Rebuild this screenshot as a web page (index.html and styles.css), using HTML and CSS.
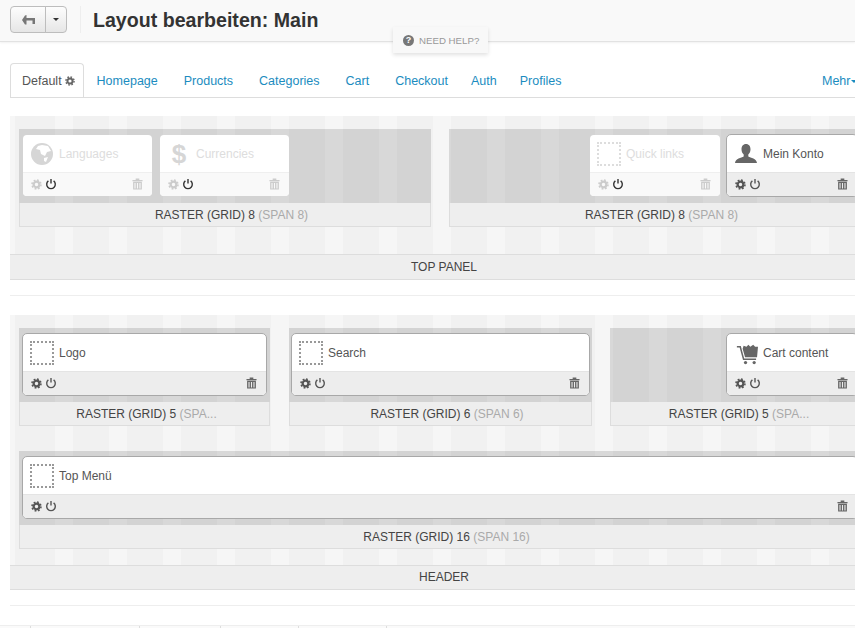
FILE: index.html
```html
<!DOCTYPE html>
<html lang="de">
<head>
  <meta charset="UTF-8" />
  <meta name="viewport" content="width=device-width, initial-scale=1.0"/>
  <title>Layout bearbeiten: Main</title>
  <link rel="stylesheet" href="styles.css">
</head>
<body>
  <!-- shared icons -->
  <svg class="sprite" xmlns="http://www.w3.org/2000/svg">
    <symbol id="i-gear" viewBox="0 0 12 12">
      <circle cx="6" cy="6" r="3.1" fill="none" stroke="currentColor" stroke-width="2.4"/>
      <circle cx="6" cy="6" r="4.9" fill="none" stroke="currentColor" stroke-width="1.7" stroke-dasharray="1.95 1.9"/>
    </symbol>
    <symbol id="i-power" viewBox="0 0 12 12">
      <path d="M3.4 2.9a4.3 4.3 0 1 0 5.2 0M6 1v4.6" fill="none" stroke="currentColor" stroke-width="1.4"/>
    </symbol>
    <symbol id="i-trash" viewBox="0 0 12 12">
      <path fill="currentColor" fill-rule="evenodd" d="M4 0h4v1.500h3.500V3H.5V1.500H4zM1.200 3.600h9.600V12H1.200zM2.700 4.800v6h1.200v-6zM5.400 4.800v6h1.200v-6zM8.100 4.800v6h1.200v-6z"/>
    </symbol>
  </svg>

  <header class="topbar">
    <div class="btn-group">
      <button class="btn btn-back">
        <svg width="13" height="10" viewBox="0 0 13 10"><path fill="#777" d="M4.500 0v3H13v2.400H4.500v4L3 9.400 0 5l3-4.400z"/><path fill="#777" d="M10.500 4H13v5h-2.500z"/></svg>
      </button>
      <button class="btn btn-caret"><span class="caret"></span></button>
    </div>
    <h1>Layout bearbeiten: Main</h1>
  </header>

  <div class="help-tab"><span class="help-icon">?</span>NEED HELP?</div>

  <nav class="tabs">
    <a class="tab active">Default <svg class="tab-gear" width="10" height="10"><use href="#i-gear"/></svg></a>
    <a class="tab">Homepage</a>
    <a class="tab">Products</a>
    <a class="tab">Categories</a>
    <a class="tab">Cart</a>
    <a class="tab">Checkout</a>
    <a class="tab tab-tight">Auth</a>
    <a class="tab tab-tight">Profiles</a>
    <a class="tab more">Mehr<span class="caret caret-blue"></span></a>
  </nav>

  <section class="panel">
    <div class="row row-loose">
      <div class="raster w-412">
        <div class="well">
          <div class="card off">
            <div class="card-head">
              <svg class="ico" viewBox="0 0 24 24"><circle cx="12" cy="12" r="11" fill="#d6d6d6"/><path fill="#fff" d="M12 3l6 1 3 5-4 1-2 4-4-2-1-4-4-1 2-3zM14 16l4-1-2 5-2-1z"/></svg>
              <span>Languages</span>
            </div>
            <div class="card-foot">
              <svg class="i gr"><use href="#i-gear"/></svg><svg class="i pw"><use href="#i-power"/></svg><svg class="i tr"><use href="#i-trash"/></svg>
            </div>
          </div>
          <div class="card off">
            <div class="card-head">
              <span class="ico dollar">$</span>
              <span>Currencies</span>
            </div>
            <div class="card-foot">
              <svg class="i gr"><use href="#i-gear"/></svg><svg class="i pw"><use href="#i-power"/></svg><svg class="i tr"><use href="#i-trash"/></svg>
            </div>
          </div>
        </div>
        <div class="raster-label shift-13">RASTER (GRID) 8 <em>(SPAN 8)</em></div>
      </div>
      <div class="raster w-425">
        <div class="well well-end">
          <div class="card off">
            <div class="card-head">
              <span class="ico dotted"></span>
              <span>Quick links</span>
            </div>
            <div class="card-foot">
              <svg class="i gr"><use href="#i-gear"/></svg><svg class="i pw"><use href="#i-power"/></svg><svg class="i tr"><use href="#i-trash"/></svg>
            </div>
          </div>
          <div class="card">
            <div class="card-head">
              <svg class="ico" viewBox="0 0 24 24"><path fill="#666" d="M12 2c3 0 4.500 2.300 4.500 5.200 0 2.300-1 4.300-2.200 5.300v2c2.500 1.200 8.200 2 8.700 6.500H1c.5-4.500 6.200-5.300 8.700-6.500v-2C8.500 11.500 7.500 9.500 7.500 7.200 7.500 4.300 9 2 12 2z"/></svg>
              <span>Mein Konto</span>
            </div>
            <div class="card-foot">
              <svg class="i gr"><use href="#i-gear"/></svg><svg class="i pw"><use href="#i-power"/></svg><svg class="i tr"><use href="#i-trash"/></svg>
            </div>
          </div>
        </div>
        <div class="raster-label">RASTER (GRID) 8 <em>(SPAN 8)</em></div>
      </div>
    </div>
    <div class="panel-label">TOP PANEL</div>
  </section>

  <hr class="divider">

  <section class="panel">
    <div class="row">
      <div class="raster w-251">
        <div class="well">
          <div class="card wide">
            <div class="card-head">
              <span class="ico dotted"></span>
              <span>Logo</span>
            </div>
            <div class="card-foot">
              <svg class="i gr"><use href="#i-gear"/></svg><svg class="i pw"><use href="#i-power"/></svg><svg class="i tr"><use href="#i-trash"/></svg>
            </div>
          </div>
        </div>
        <div class="raster-label shift-4">RASTER (GRID) 5 <em>(SPA...</em></div>
      </div>
      <div class="raster w-303">
        <div class="well well-tight">
          <div class="card wide">
            <div class="card-head">
              <span class="ico dotted"></span>
              <span>Search</span>
            </div>
            <div class="card-foot">
              <svg class="i gr"><use href="#i-gear"/></svg><svg class="i pw"><use href="#i-power"/></svg><svg class="i tr"><use href="#i-trash"/></svg>
            </div>
          </div>
        </div>
        <div class="raster-label shift-13">RASTER (GRID) 6 <em>(SPAN 6)</em></div>
      </div>
      <div class="raster w-264">
        <div class="well well-end">
          <div class="card">
            <div class="card-head">
              <svg class="ico" viewBox="-3 -1 25 25"><path fill="none" stroke="#666" stroke-width="1.600" d="M0 5h3.500l3.500 13h13"/><path fill="#666" d="M6 7l1-3 3 1 2-2 2 2 3-2 2 2h3l-1 11H8.500z"/><circle cx="9" cy="21.500" r="1.700" fill="#666"/><circle cx="18" cy="21.500" r="1.700" fill="#666"/></svg>
              <span>Cart content</span>
            </div>
            <div class="card-foot">
              <svg class="i gr"><use href="#i-gear"/></svg><svg class="i pw"><use href="#i-power"/></svg><svg class="i tr"><use href="#i-trash"/></svg>
            </div>
          </div>
        </div>
        <div class="raster-label pull-6">RASTER (GRID) 5 <em>(SPA...</em></div>
      </div>
    </div>
    <div class="row">
      <div class="raster w-855">
        <div class="well well-end">
          <div class="card wide">
            <div class="card-head">
              <span class="ico dotted"></span>
              <span>Top Menü</span>
            </div>
            <div class="card-foot">
              <svg class="i gr"><use href="#i-gear"/></svg><svg class="i pw"><use href="#i-power"/></svg><svg class="i tr"><use href="#i-trash"/></svg>
            </div>
          </div>
        </div>
        <div class="raster-label">RASTER (GRID) 16 <em>(SPAN 16)</em></div>
      </div>
    </div>
    <div class="panel-label short">HEADER</div>
  </section>

  <hr class="divider">

  <div class="page-end">
    <span></span><span></span><span></span><span></span><span></span>
  </div>
</body>
</html>
```

FILE: styles.css
```css
html, body {
  overflow: hidden;
}
body {
  margin: 0;
  height: 628px;
  width: 855px;
  background: #fff;
  font-family: "Liberation Sans", Arial, sans-serif;
  font-size: 12px;
  color: #444;
  position: relative;
}
.sprite {
  display: none;
}

/* top bar */
.topbar {
  height: 41px;
  background: #f9f9f9;
  border-bottom: 1px solid #e2e2e2;
  box-shadow: 0 1px 2px rgba(0,0,0,0.06);
  display: flex;
  align-items: center;
  padding-left: 10px;
}
.btn-group {
  display: flex;
  height: 27px;
  margin-top: -2px;
  padding-right: 13px;
  border-right: 1px solid #eee;
}
.btn {
  padding: 0;
  height: 27px;
  border: 1px solid #bdbdbd;
  background: linear-gradient(#fdfdfd, #e6e6e6);
  display: flex;
  align-items: center;
  justify-content: center;
}
.btn-back {
  width: 36px;
  border-radius: 4px 0 0 4px;
}
.btn-caret {
  width: 22px;
  margin-left: -1px;
  border-radius: 0 4px 4px 0;
}
.caret {
  width: 0;
  height: 0;
  border-left: 3px solid transparent;
  border-right: 3px solid transparent;
  border-top: 3px solid #333;
}
.caret-blue {
  display: inline-block;
  margin-left: 1px;
  vertical-align: middle;
  border-top-color: #1b8cc0;
}
h1 {
  margin: -2px 0 0 12px;
  font-size: 19.6px;
  line-height: 24px;
  font-weight: bold;
  color: #333;
}
.help-tab {
  position: absolute;
  left: 393px;
  top: 27px;
  width: 95px;
  height: 26px;
  box-sizing: border-box;
  padding-left: 10px;
  background: #f8f8f8;
  box-shadow: 0 2px 4px rgba(0,0,0,0.12);
  display: flex;
  align-items: center;
  font-size: 9.7px;
  color: #999;
}
.help-icon {
  width: 11px;
  height: 11px;
  margin-right: 5px;
  border-radius: 50%;
  background: #777;
  color: #fff;
  font-size: 9px;
  font-weight: bold;
  line-height: 11px;
  text-align: center;
}

/* tabs */
.tabs {
  display: flex;
  margin: 22px 0 18px 10px;
  height: 33px;
  border-bottom: 1px solid #ddd;
  font-size: 12.5px;
}
.tab {
  padding: 0 13px;
  line-height: 35px;
  height: 33px;
  color: #1b8cc0;
}
.tab-tight {
  margin-left: -3px;
}
.tab.active {
  box-sizing: content-box;
  height: 33px;
  padding: 0 7.5px 0 11px;
  color: #555;
  background: #fff;
  border: 1px solid #ddd;
  border-bottom: none;
  border-radius: 4px 4px 0 0;
  margin-top: -1px;
}
.tab-gear {
  color: #666;
  vertical-align: -1px;
}
.tab.more {
  margin-left: auto;
  padding: 0;
  width: 33px;
  white-space: nowrap;
}

/* panels */
.panel {
  box-sizing: border-box;
  width: 868px;
  margin-left: 10px;
  padding-top: 13px;
  background-color: #f1f1f1;
  background-image: repeating-linear-gradient(90deg, #f1f1f1 0, #f1f1f1 36px, #f6f6f6 36px, #f6f6f6 54px);
  background-position: 9px 0;
}
.row {
  display: flex;
  gap: 18px;
  padding-left: 9px;
  margin-bottom: 25px;
}
.row:nth-last-child(2) {
  margin-bottom: 16px;
}
.row-loose.row-loose {
  margin-bottom: 27px;
}
.w-412 { width: 412px; }
.w-425 { width: 425px; }
.w-251 { width: 251px; margin-right: 1px; }
.w-303 { width: 303px; }
.w-264 { width: 264px; }
.w-855 { width: 855px; }

.raster {
  flex: none;
}
.well {
  box-sizing: border-box;
  height: 74px;
  padding: 5px 3px 6px;
  display: flex;
  gap: 6px;
  background: rgba(0,0,0,0.12);
}
.well-end {
  justify-content: flex-end;
  padding-right: 16px;
}
.well-tight {
  padding-left: 2px;
  padding-right: 2px;
}
.raster-label {
  box-sizing: border-box;
  height: 24px;
  line-height: 25px;
  text-align: center;
  background: #eee;
  border: 1px solid #ddd;
  border-width: 0 1px 1px;
  white-space: nowrap;
}
/* the labels are not quite centred in their cells */
.shift-13 { padding-left: 13px; }
.shift-4 { padding-left: 4px; }
.pull-6 { padding-right: 6px; }
.raster-label em {
  font-style: normal;
  color: #aaa;
}
.panel-label {
  box-sizing: border-box;
  height: 26px;
  line-height: 25px;
  text-align: center;
  background: #eee;
  border: 1px solid #ddd;
  border-width: 1px 0;
}
.panel-label.short {
  height: 25px;
  line-height: 22px;
}

/* widget cards */
.card {
  box-sizing: border-box;
  width: 132px;
  height: 63px;
  border: 1px solid #a8a8a8;
  border-radius: 5px;
  background: #fff;
  overflow: hidden;
}
.card.wide {
  flex: 1;
}
.card-head {
  box-sizing: border-box;
  height: 37px;
  padding: 0 7px;
  display: flex;
  align-items: center;
  color: #555;
}
.ico {
  flex: none;
  box-sizing: border-box;
  width: 24px;
  height: 24px;
  margin-right: 5px;
}
.dotted {
  border: 2px dotted #999;
}
.dollar {
  font-size: 26px;
  font-weight: bold;
  line-height: 24px;
  text-align: center;
  color: #d6d6d6;
}
.card-foot {
  box-sizing: border-box;
  height: 24px;
  padding: 0 9px 1px 8px;
  display: flex;
  align-items: center;
  background: #ededed;
  border-top: 1px solid #e4e4e4;
  color: #555;
}
.i {
  width: 12px;
  height: 12px;
}
.gr {
  width: 11px;
  height: 11px;
}
.pw {
  margin-left: 3px;
}
.tr {
  width: 11px;
  margin-left: auto;
  color: #666;
}

/* disabled widgets */
.card.off {
  width: 131px;
  border-color: transparent;
  background-clip: padding-box;
}
.well-end .card.off {
  width: 132px;
  margin-right: -1px;
}
.off .card-head {
  color: #ddd;
}
.off .dotted {
  border-color: #ddd;
}
.off .card-foot {
  background: #f9f9f9;
  border-top-color: #efefef;
  color: #ccc;
}
.off .pw {
  color: #333;
}
.off .tr {
  color: #ccc;
}

.divider {
  height: 1px;
  margin: 15px 0 19px 10px;
  border: none;
  background: #eee;
}
.page-end {
  display: flex;
  height: 20px;
  border-top: 1px solid #eee;
  background: #fafafa;
}
.page-end span {
  height: 4px;
  border-right: 1px solid #ddd;
}
.page-end span:nth-child(1) { width: 30px; }
.page-end span:nth-child(2) { width: 108px; }
.page-end span:nth-child(3) { width: 80px; }
.page-end span:nth-child(4) { width: 77px; }
.page-end span:nth-child(5) { width: 87px; }
```
